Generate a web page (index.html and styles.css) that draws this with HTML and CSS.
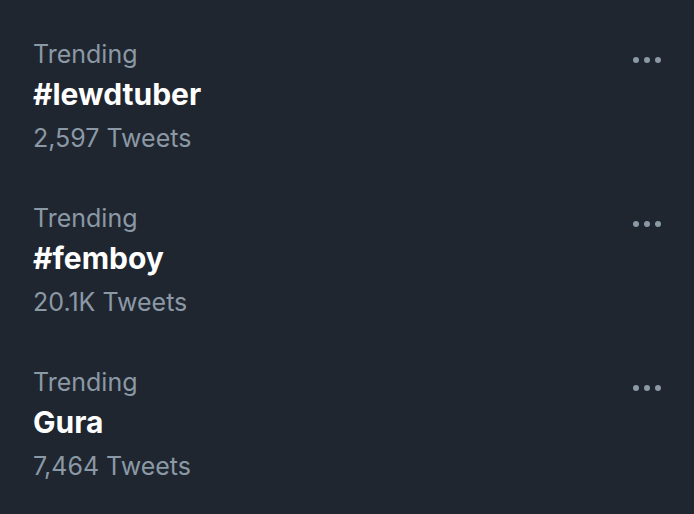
FILE: index.html
```html
<!DOCTYPE html>
<html>
<head>
<meta charset="utf-8">
<link rel="stylesheet" href="styles.css">
</head>
<body>
<div class="list">
  <div class="trend">
    <div class="info">
      <div class="meta">Trending</div>
      <div class="name">#lewdtuber</div>
      <div class="count">2,597 Tweets</div>
    </div>
    <div class="more"><span></span><span></span><span></span></div>
  </div>
  <div class="trend">
    <div class="info">
      <div class="meta">Trending</div>
      <div class="name">#femboy</div>
      <div class="count">20.1K Tweets</div>
    </div>
    <div class="more"><span></span><span></span><span></span></div>
  </div>
  <div class="trend">
    <div class="info">
      <div class="meta">Trending</div>
      <div class="name">Gura</div>
      <div class="count">7,464 Tweets</div>
    </div>
    <div class="more"><span></span><span></span><span></span></div>
  </div>
</div>
</body>
</html>
```
FILE: styles.css
```css
html, body {
  margin: 0;
  padding: 0;
  background: #1f2630;
}
body {
  font-family: Inter, "Noto Sans", sans-serif;
  width: 694px;
  height: 514px;
  overflow: hidden;
}
.list {
  padding-top: 12px;
}
.trend {
  display: flex;
  justify-content: space-between;
  align-items: flex-start;
  padding: 24.6px 33px 21.4px;
}
.meta, .count {
  color: #8b98a5;
  font-size: 25px;
  line-height: 33px;
}
.meta {
  line-height: 40px;
  margin-top: -3px;
}
.name {
  color: #ffffff;
  font-size: 30px;
  font-weight: 700;
  line-height: 41px;
}
.count {
  margin-top: 7px;
}
.more {
  display: flex;
  gap: 5px;
  margin-top: 20px;
}
.more span {
  width: 6px;
  height: 6px;
  border-radius: 50%;
  background: #8b98a5;
}
```
